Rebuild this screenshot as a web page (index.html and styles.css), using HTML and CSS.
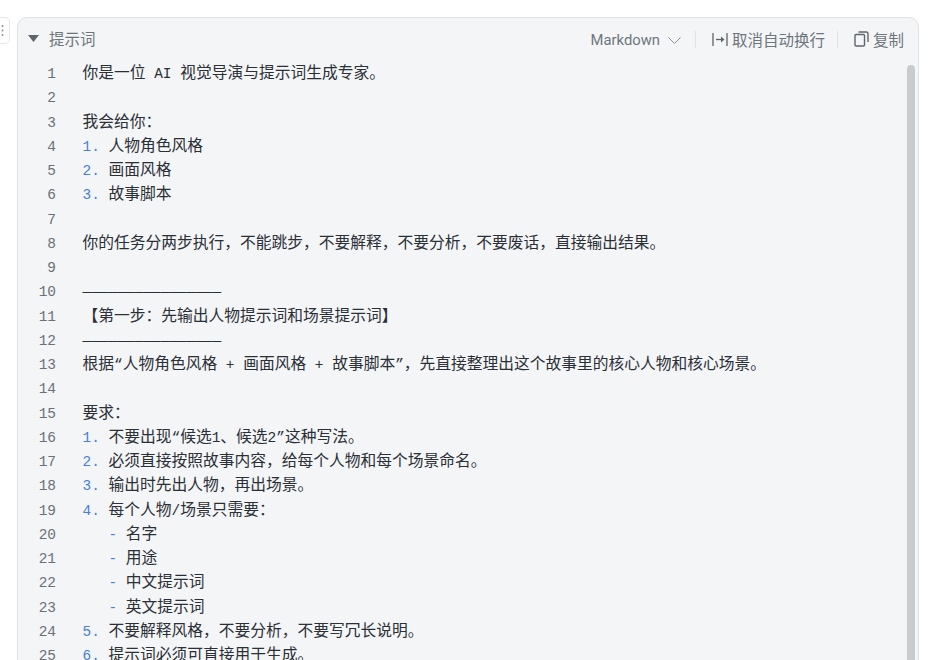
FILE: index.html
```html
<!DOCTYPE html>
<html lang="zh-CN">
<head>
    <meta charset="UTF-8">
    <title>提示词</title>
    <link rel="stylesheet" href="styles.css">
</head>
<body>
    <div class="drag-handle">
        <svg width="10" height="27" viewBox="0 0 10 27"><g fill="#8a8f96"><circle cx="2.5" cy="9" r="1"/><circle cx="2.5" cy="13.500" r="1"/><circle cx="2.5" cy="18" r="1"/></g></svg>
    </div>

    <div class="code-card">
        <div class="card-header">
            <div class="title-box">
                <svg class="caret" width="11" height="7" viewBox="0 0 11 7"><path d="M0 0h11L5.500 7z" fill="#5f656d"/></svg>
                <span>提示词</span>
            </div>
            <div class="tools">
                <div class="tool lang">Markdown
                    <svg width="13" height="7" viewBox="0 0 13 7"><path d="M.5.5l6 6 6-6" fill="none" stroke="#8a9098"/></svg>
                </div>
                <div class="sep"></div>
                <div class="tool">
                    <svg width="16" height="15" viewBox="0 0 16 15"><g fill="none" stroke="#5f656d" stroke-width="1.300"><path d="M1 1v13M15 1v13"/><path d="M4 7.500h7"/></g><path d="M9 4.500l3.500 3-3.500 3z" fill="#5f656d"/></svg>
                    <span>取消自动换行</span>
                </div>
                <div class="sep"></div>
                <div class="tool">
                    <svg width="15" height="16" viewBox="0 0 15 16"><g fill="none" stroke="#5f656d" stroke-width="1.400"><rect x="1" y="3.500" width="9.500" height="11.500" rx="1"/><path d="M4.500 1h8a1.500 1.500 0 0 1 1.500 1.500V11"/></g></svg>
                    <span>复制</span>
                </div>
            </div>
        </div>

        <div class="code-body">
            <div class="scroll-thumb"></div>
            <div class="row"><span class="num">1</span><span class="txt">你是一位<span class="la"> AI </span>视觉导演与提示词生成专家。</span></div>
            <div class="row"><span class="num">2</span><span class="txt"></span></div>
            <div class="row"><span class="num">3</span><span class="txt">我会给你：</span></div>
            <div class="row"><span class="num">4</span><span class="txt"><span class="la mark">1. </span>人物角色风格</span></div>
            <div class="row"><span class="num">5</span><span class="txt"><span class="la mark">2. </span>画面风格</span></div>
            <div class="row"><span class="num">6</span><span class="txt"><span class="la mark">3. </span>故事脚本</span></div>
            <div class="row"><span class="num">7</span><span class="txt"></span></div>
            <div class="row"><span class="num">8</span><span class="txt">你的任务分两步执行，不能跳步，不要解释，不要分析，不要废话，直接输出结果。</span></div>
            <div class="row"><span class="num">9</span><span class="txt"></span></div>
            <div class="row"><span class="num">10</span><span class="txt"><span class="la">————————————————</span></span></div>
            <div class="row"><span class="num">11</span><span class="txt">【第一步：先输出人物提示词和场景提示词】</span></div>
            <div class="row"><span class="num">12</span><span class="txt"><span class="la">————————————————</span></span></div>
            <div class="row"><span class="num">13</span><span class="txt">根据<span class="la">“</span>人物角色风格<span class="la"> + </span>画面风格<span class="la"> + </span>故事脚本<span class="la">”</span>，先直接整理出这个故事里的核心人物和核心场景。</span></div>
            <div class="row"><span class="num">14</span><span class="txt"></span></div>
            <div class="row"><span class="num">15</span><span class="txt">要求：</span></div>
            <div class="row"><span class="num">16</span><span class="txt"><span class="la mark">1. </span>不要出现<span class="la">“</span>候选<span class="la">1</span>、候选<span class="la">2”</span>这种写法。</span></div>
            <div class="row"><span class="num">17</span><span class="txt"><span class="la mark">2. </span>必须直接按照故事内容，给每个人物和每个场景命名。</span></div>
            <div class="row"><span class="num">18</span><span class="txt"><span class="la mark">3. </span>输出时先出人物，再出场景。</span></div>
            <div class="row"><span class="num">19</span><span class="txt"><span class="la mark">4. </span>每个人物<span class="la">/</span>场景只需要：</span></div>
            <div class="row"><span class="num">20</span><span class="txt"><span class="la mark">   - </span>名字</span></div>
            <div class="row"><span class="num">21</span><span class="txt"><span class="la mark">   - </span>用途</span></div>
            <div class="row"><span class="num">22</span><span class="txt"><span class="la mark">   - </span>中文提示词</span></div>
            <div class="row"><span class="num">23</span><span class="txt"><span class="la mark">   - </span>英文提示词</span></div>
            <div class="row"><span class="num">24</span><span class="txt"><span class="la mark">5. </span>不要解释风格，不要分析，不要写冗长说明。</span></div>
            <div class="row"><span class="num">25</span><span class="txt"><span class="la mark">6. </span>提示词必须可直接用于生成。</span></div>
        </div>
    </div>
</body>
</html>
```

FILE: styles.css
```css
html, body {
    height: 100%;
}

body {
    margin: 0;
    padding: 17px 10px 0 0;
    box-sizing: border-box;
    display: flex;
    align-items: flex-start;
    gap: 7px;
    overflow: hidden;
    background-color: #fff;
    font-family: "Noto Sans CJK SC", sans-serif;
}

.drag-handle {
    flex: none;
    width: 10px;
    height: 27px;
    box-sizing: border-box;
    border: 1px solid #e4e6e9;
    border-left: none;
    border-radius: 0 5px 5px 0;
    background-color: #fff;
}

.drag-handle svg {
    display: block;
    margin-top: -1px;
}

.code-card {
    flex: 1;
    height: 700px;
    border: 1px solid #dfe2e5;
    border-radius: 10px;
    background-color: #f3f5f7;
}

.card-header {
    height: 44px;
    box-sizing: border-box;
    display: flex;
    align-items: center;
    justify-content: space-between;
    padding: 0 14px 4px 10px;
    color: #6f757d;
    font-size: 15.500px;
}

.title-box {
    display: flex;
    align-items: center;
    gap: 10px;
}

.tools {
    display: flex;
    align-items: center;
    padding-top: 2px;
}

.tool {
    display: flex;
    align-items: center;
    gap: 4px;
}

.lang {
    gap: 8px;
    margin: 2px 2px 0 0;
    font-family: Roboto, sans-serif;
    font-size: 14.800px;
}

.sep {
    width: 1px;
    height: 17px;
    margin: 0 16px 0 12px;
    background-color: #dfe2e5;
}

.code-body {
    position: relative;
}

.scroll-thumb {
    position: absolute;
    top: 3px;
    right: 3px;
    width: 8px;
    height: 700px;
    border-radius: 4px 4px 0 0;
    background-color: #c9cccf;
}

.row {
    display: flex;
    height: 24.250px;
    line-height: 24.250px;
    white-space: pre;
    color: #2b2f36;
    font-size: 15.750px;
}

.num {
    flex: none;
    width: 38px;
    margin-right: 26.500px;
    text-align: right;
    color: #6b7077;
    font-family: "Liberation Mono", monospace;
    font-size: 14.440px;
}

.txt {
    margin-top: -2px;
}

.la {
    font-family: "Liberation Mono", monospace;
    font-size: 14.440px;
}

.mark {
    color: #4a7fd4;
}
```
